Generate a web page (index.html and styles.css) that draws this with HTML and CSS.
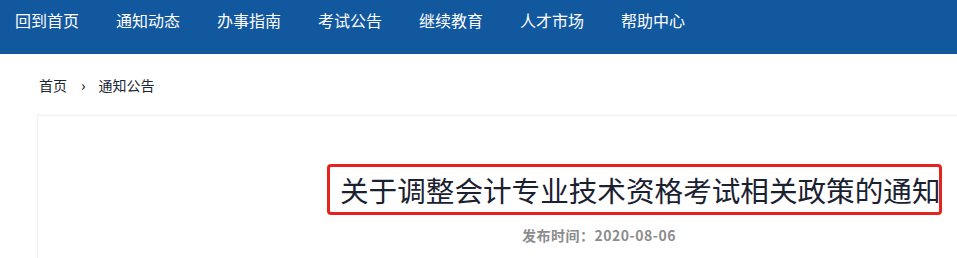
FILE: index.html
```html
<!DOCTYPE html>
<html lang="zh-CN">
<head>
<meta charset="utf-8">
<title>关于调整会计专业技术资格考试相关政策的通知</title>
<link rel="stylesheet" href="styles.css">
</head>
<body>
<nav class="topnav">
  <a class="nav-item" href="#">回到首页</a>
  <a class="nav-item" href="#">通知动态</a>
  <a class="nav-item" href="#">办事指南</a>
  <a class="nav-item" href="#">考试公告</a>
  <a class="nav-item" href="#">继续教育</a>
  <a class="nav-item" href="#">人才市场</a>
  <a class="nav-item" href="#">帮助中心</a>
</nav>
<div class="crumbs">
  <a class="crumb" href="#">首页</a>
  <span class="crumb-sep">›</span>
  <a class="crumb" href="#">通知公告</a>
</div>
<main class="card">
  <h1 class="title"><span class="title-text">关于调整会计专业技术资格考试相关政策的通知</span></h1>
  <div class="meta">发布时间：2020-08-06</div>
</main>
</body>
</html>
```

FILE: styles.css
```css
html, body {
  margin: 0;
  padding: 0;
  background: #ffffff;
  overflow: hidden;
  font-family: "Noto Sans CJK SC", "Liberation Sans", sans-serif;
}

.topnav {
  display: flex;
  gap: 37px;
  height: 54px;
  box-sizing: border-box;
  padding-left: 15px;
  background: #12589f;
}

.nav-item {
  display: block;
  width: 64px;
  font-size: 16px;
  line-height: 40px;
  color: #ffffff;
  text-decoration: none;
  white-space: nowrap;
}

.crumbs {
  display: flex;
  align-items: center;
  padding: 21px 0 20px 39px;
  height: 20px;
}

.crumb {
  font-size: 14px;
  line-height: 20px;
  color: #1c2633;
  text-decoration: none;
}

.crumb-sep {
  font-size: 14px;
  line-height: 20px;
  color: #333a44;
  font-weight: bold;
  margin: 0 13px 0 14px;
}

.card {
  margin-left: 37px;
  width: 1124px;
  min-height: 200px;
  box-sizing: border-box;
  border: 1px solid #f1f1f1;
  box-shadow: 0 0 3px rgba(0, 0, 0, 0.04);
  padding-top: 48px;
}

.title {
  display: flex;
  align-items: center;
  box-sizing: border-box;
  width: 615px;
  height: 51px;
  margin: 0 0 0 289px;
  padding: 0 0 0 10px;
  border: 3px solid #e4231f;
  border-radius: 4px;
  font-size: 28.6px;
  font-weight: 400;
  line-height: 45px;
  color: #1a2130;
  white-space: nowrap;
}

.title-text {
  display: block;
}

.meta {
  margin: 10px 0 0 484px;
  font-size: 14px;
  line-height: 20px;
  font-weight: bold;
  letter-spacing: 0.5px;
  color: #8c8c8c;
}
```
